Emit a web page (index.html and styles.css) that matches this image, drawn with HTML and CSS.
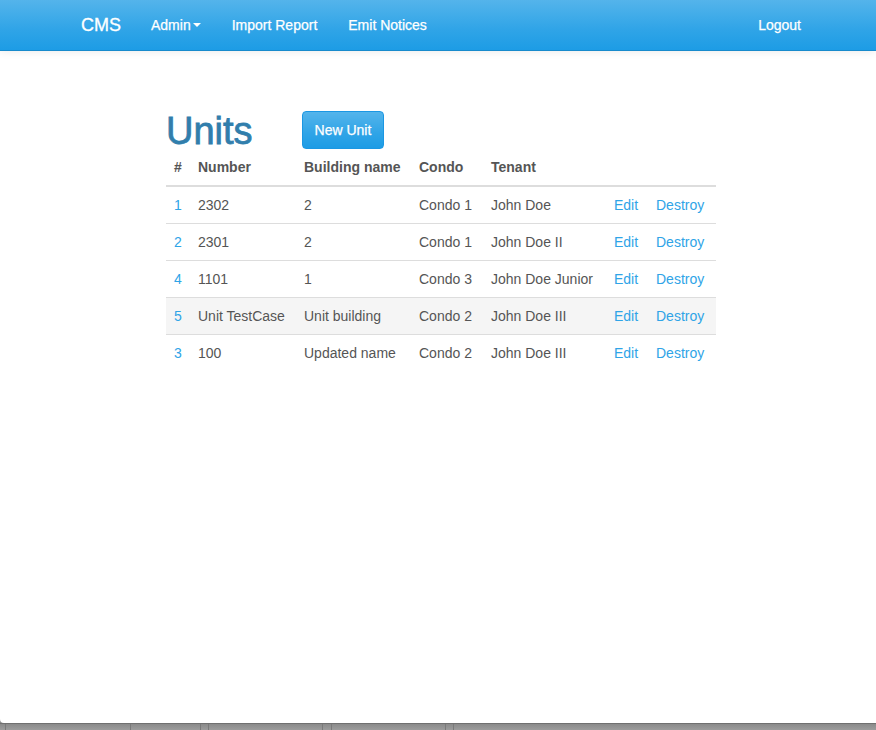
FILE: index.html
```html
<!DOCTYPE html>
<html>
<head>
<meta charset="utf-8">
<title>Units</title>
<link rel="stylesheet" href="styles.css">
</head>
<body>
<div class="window">
  <nav class="navbar">
    <div class="nav-left">
      <a class="brand" href="#">CMS</a>
      <a class="nav-link" href="#">Admin<span class="caret"></span></a>
      <a class="nav-link" href="#">Import Report</a>
      <a class="nav-link" href="#">Emit Notices</a>
    </div>
    <div class="nav-right">
      <a class="nav-link" href="#">Logout</a>
    </div>
  </nav>
  <main class="content">
    <div class="title-row">
      <h1 class="title">Units</h1>
      <a class="btn" href="#">New Unit</a>
    </div>
    <table class="units">
      <colgroup>
        <col class="c-id"><col class="c-num"><col class="c-bld"><col class="c-condo"><col class="c-ten"><col class="c-edit"><col class="c-del">
      </colgroup>
      <thead>
        <tr><th>#</th><th>Number</th><th>Building name</th><th>Condo</th><th>Tenant</th><th></th><th></th></tr>
      </thead>
      <tbody>
        <tr><td><a href="#">1</a></td><td>2302</td><td>2</td><td>Condo 1</td><td>John Doe</td><td><a href="#">Edit</a></td><td><a href="#">Destroy</a></td></tr>
        <tr><td><a href="#">2</a></td><td>2301</td><td>2</td><td>Condo 1</td><td>John Doe II</td><td><a href="#">Edit</a></td><td><a href="#">Destroy</a></td></tr>
        <tr><td><a href="#">4</a></td><td>1101</td><td>1</td><td>Condo 3</td><td>John Doe Junior</td><td><a href="#">Edit</a></td><td><a href="#">Destroy</a></td></tr>
        <tr class="hover"><td><a href="#">5</a></td><td>Unit TestCase</td><td>Unit building</td><td>Condo 2</td><td>John Doe III</td><td><a href="#">Edit</a></td><td><a href="#">Destroy</a></td></tr>
        <tr><td><a href="#">3</a></td><td>100</td><td>Updated name</td><td>Condo 2</td><td>John Doe III</td><td><a href="#">Edit</a></td><td><a href="#">Destroy</a></td></tr>
      </tbody>
    </table>
  </main>
</div>
<div class="desk">
  <div class="seg s1"></div>
  <div class="seg s2"></div>
  <div class="seg s3"></div>
  <div class="seg s4"></div>
  <div class="seg s5"></div>
  <div class="seg s6"></div>
  <div class="seg s7"></div>
  <div class="seg s8"></div>
</div>
</body>
</html>
```

FILE: styles.css
```css
* { box-sizing: border-box; }
html, body { margin: 0; padding: 0; }
body {
  height: 730px;
  overflow: hidden;
  display: flex;
  flex-direction: column;
  background: #8e8e8e;
  font-family: "Liberation Sans", Arial, sans-serif;
  font-size: 14px;
  line-height: 20px;
  color: #555555;
}
a { color: #2fa4e7; text-decoration: none; }

.window {
  height: 723px;
  flex: none;
  background: #ffffff;
  border-bottom-left-radius: 4px;
  display: flex;
  flex-direction: column;
}

.navbar {
  height: 51px;
  flex: none;
  display: flex;
  justify-content: space-between;
  padding: 0 60px 0 66px;
  background: linear-gradient(#54b4eb, #2fa4e7 60%, #1d9ce5);
  border-bottom: 1px solid #178acc;
  box-shadow: 0 1px 8px rgba(0,0,0,0.08);
  position: relative;
  z-index: 1;
}
.nav-left, .nav-right { display: flex; align-items: stretch; }
.brand {
  color: #ffffff;
  font-size: 18px;
  line-height: 20px;
  padding: 15px 15px;
  -webkit-text-stroke: 0.3px #ffffff;
}
.nav-link {
  color: #ffffff;
  font-size: 14px;
  line-height: 20px;
  padding: 15px 15px;
  display: flex;
  align-items: center;
  height: 50px;
  -webkit-text-stroke: 0.25px #ffffff;
}
.nav-link + .nav-link { margin-left: 1px; }
.caret {
  display: inline-block;
  width: 0;
  height: 0;
  margin-left: 2px;
  border-top: 4px solid #ffffff;
  border-left: 4px solid transparent;
  border-right: 4px solid transparent;
}

.content {
  padding: 59px 0 0 166px;
}
.title-row {
  display: flex;
  align-items: center;
  gap: 49px;
  height: 39px;
}
.title {
  margin: 0;
  font-size: 38px;
  line-height: 40px;
  font-weight: normal;
  color: #317eac;
  -webkit-text-stroke: 0.8px #317eac;
  position: relative;
  top: 1px;
}
.btn {
  display: inline-block;
  color: #ffffff;
  padding: 8px 12px;
  font-size: 14px;
  line-height: 20px;
  border: 1px solid #1b97e3;
  border-radius: 4px;
  background: linear-gradient(#54b4eb, #2fa4e7 60%, #1d9ce5);
  -webkit-text-stroke: 0.25px #ffffff;
}

.units {
  margin-top: 0;
  width: 550px;
  table-layout: fixed;
  border-collapse: collapse;
  border-spacing: 0;
}
.c-id { width: 24px; }
.c-num { width: 106px; }
.c-bld { width: 115px; }
.c-condo { width: 72px; }
.c-ten { width: 123px; }
.c-edit { width: 42px; }
.c-del { width: 68px; }
.units th, .units td {
  padding: 8px;
  line-height: 20px;
  text-align: left;
  white-space: nowrap;
}
.units th {
  font-weight: bold;
  border-bottom: 2px solid #dddddd;
}
.units tbody tr + tr td { border-top: 1px solid #dddddd; }
.units tr.hover td { background: #f5f5f5; }

.desk {
  flex: 1;
  display: flex;
  border-top: 1px solid #707070;
  background: linear-gradient(#8a8a8a, #9c9c9c);
}
.seg { height: 100%; border-right: 1px solid #7a7a7a; }
.s1 { width: 6px; }
.s2 { width: 125px; }
.s3 { width: 70px; }
.s4 { width: 8px; }
.s5 { width: 114px; }
.s6 { width: 9px; }
.s7 { width: 114px; }
.s8 { width: 8px; }
```
